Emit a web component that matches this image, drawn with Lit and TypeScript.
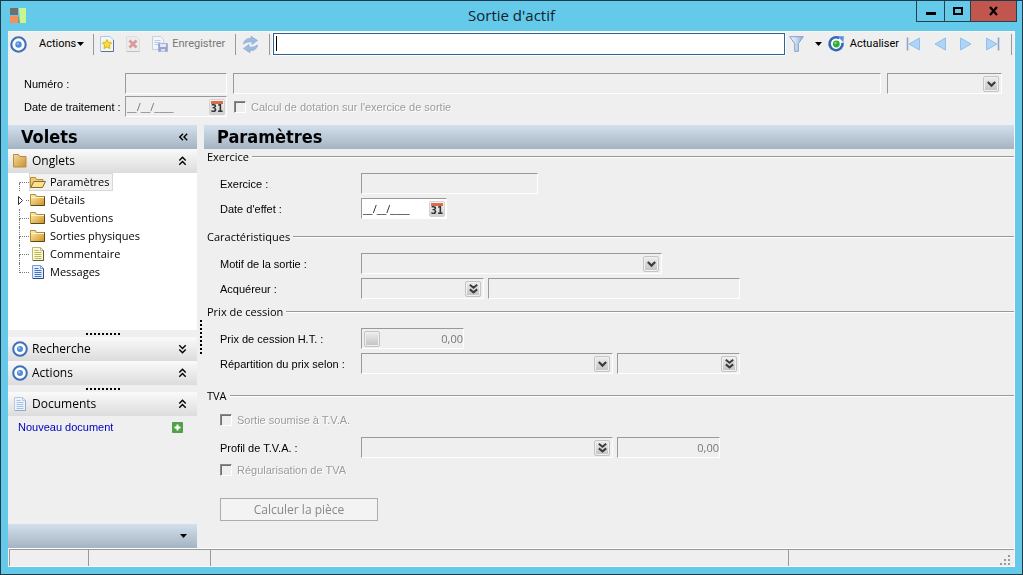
import { LitElement, html, svg, css, nothing } from "lit";
import { customElement, property, state } from "lit/decorators.js";
import { classMap } from "lit/directives/class-map.js";

const controls = css`
  * { box-sizing: border-box; }
  button, input, select { font: inherit; margin: 0; padding: 0; border: 0; background: none; color: inherit; border-radius: 0; }
  button { display: inline-flex; align-items: center; }
  svg { display: block; flex: none; overflow: visible; }
`;

/* ---------- icons ---------- */

const target = (size: number) => html`<svg width=${size} height=${size} viewBox="0 0 16 16" aria-hidden="true">
  <circle cx="8" cy="8" r="6.8" fill="#fff" stroke="#3f6fb8" stroke-width="2"></circle>
  <circle cx="8" cy="8" r="3" fill="#4c8bd6"></circle><circle cx="7.3" cy="7.2" r="1.2" fill="#8cc0f2"></circle></svg>`;

const folder = html`<svg width="16" height="16" viewBox="0 0 16 16" aria-hidden="true">
  <defs><linearGradient id="f" x1="0" y1="0" x2="1" y2="1"><stop offset="0" stop-color="#fff2b8"></stop><stop offset="1" stop-color="#d08f1c"></stop></linearGradient></defs>
  <path d="M.5 4.500v-2h5l1 2h8v9h-14z" fill="url(#f)" stroke="#b98a34"></path>
  <path d="M1 13.500h13.500v-9" fill="none" stroke="#5e481d"></path><path d="M1.500 5.500h12.500" fill="none" stroke="#fff6d0"></path></svg>`;

const folderTab = html`<svg width="16" height="16" viewBox="0 0 16 16" aria-hidden="true">
  <defs><linearGradient id="t" x1="0" y1="0" x2="1" y2="1"><stop offset="0" stop-color="#f8dc98"></stop><stop offset="1" stop-color="#c98f35"></stop></linearGradient></defs>
  <path d="M1.500 3.500v-2h5l1.500 2h6v10.500h-12.500z" fill="url(#t)" stroke="#b98a44"></path></svg>`;

const folderOpen = html`<svg width="16" height="16" viewBox="0 0 16 16" aria-hidden="true">
  <path d="M.5 13.500v-10h5l1 2h6.500v2.500" fill="#f0cc74" stroke="#b98a34"></path>
  <path d="M.8 13.500l3-6h11.700l-3 6z" fill="#fbe08f" stroke="#8a6a2a"></path></svg>`;

const page = (line: string, fill: string, edge: string, dark: string) => html`<svg width="16" height="16" viewBox="0 0 16 16" aria-hidden="true">
  <path d="M2.500 1.500h8l3 3v10h-11z" fill=${fill} stroke=${edge}></path>
  <path d="M10.500 1.500v3h3" fill="none" stroke=${edge}></path>
  <path d="M4.500 6.500h7M4.500 8.500h7M4.500 10.500h7M4.500 12.500h7M4.500 4.500h4" stroke=${line}></path>
  <path d="M3 14.500h10.500v-10" fill="none" stroke=${dark}></path></svg>`;

const pageNew = html`<svg width="14" height="16" viewBox="0 0 14 16" aria-hidden="true">
  <path d="M.5 .5h9.500l3.500 3.500v11.500h-13z" fill="#f1f6fd" stroke="#b3c6e0"></path><path d="M1 15.500h12.500v-11.500" fill="none" stroke="#5d7391"></path>
  <path d="M2.500 4h9v9h-9z" fill="#fbf3a8"></path>
  <path d="M7 3.500l1.400 3 3.300.4-2.400 2.300.6 3.300-2.900-1.600-2.900 1.600.6-3.300-2.400-2.300 3.300-.4z" fill="#ffdc2e" stroke="#b9a04a" stroke-width=".7"></path></svg>`;

const pageDelete = html`<svg width="14" height="16" viewBox="0 0 14 16" aria-hidden="true">
  <path d="M.5 .5h10l3 3v12h-13z" fill="#ececec" stroke="#dcdde0"></path><path d="M1 15.500h12.500" stroke="#bcc1ca"></path>
  <path d="M3.500 4.500l7 7M10.500 4.500l-7 7" stroke="#d89a9a" stroke-width="2.800"></path></svg>`;

const save = html`<svg width="16" height="16" viewBox="0 0 16 16" aria-hidden="true">
  <path d="M.5 .5h8l3 3v10h-11z" fill="#f2f6fb" stroke="#c2cfe4"></path><path d="M2.500 4.500h6M2.500 6.500h6M2.500 8.500h4" stroke="#bccbe6"></path>
  <path d="M6.500 7.500h9v8h-9z" fill="#9aa3d0" stroke="#a9b0da"></path><path d="M8 8h6v3h-6z" fill="#e4e8f6"></path><path d="M9 13h4v2.500h-4z" fill="#d7dcf0"></path></svg>`;

const sync = html`<svg width="17" height="17" viewBox="0 0 17 17" aria-hidden="true">
  <path d="M1.500 8c.5-4.500 4.500-6 7.500-5.500v-2.300l6.500 4.300-5.500 4v-2.500c-3-.5-5.500 0-8.500 2z" fill="#9dbbe0" stroke="#8aa9d2" stroke-width=".7"></path>
  <path d="M15.500 9c-.5 4.500-4.500 6-7.500 5.500v2.300l-6.500-4.300 5.500-4v2.500c3 .5 5.500 0 8.500-2z" fill="#9dbbe0" stroke="#8aa9d2" stroke-width=".7"></path></svg>`;

const funnel = html`<svg width="15" height="16" viewBox="0 0 15 16" aria-hidden="true">
  <defs><linearGradient id="n" x1="0" y1="0" x2="1" y2="0"><stop offset="0" stop-color="#fff"></stop><stop offset="1" stop-color="#8fb2e0"></stop></linearGradient></defs>
  <path d="M.7 .7h13.600l-5 6.800v7.800h-3.600v-7.800z" fill="url(#n)" stroke="#829cc8"></path></svg>`;

const reload = html`<svg width="17" height="16" viewBox="0 0 17 16" aria-hidden="true">
  <path d="M11.500 2.200a6.500 6.500 0 1 0 3 4.600" fill="#fff" stroke="#3568b2" stroke-width="2.600"></path>
  <path d="M9.500 .3h6.400l-.6 6z" fill="#5b95dc"></path>
  <circle cx="8.300" cy="8" r="3.400" fill="#2fae35"></circle><circle cx="7.500" cy="7" r="1.200" fill="#7bd97a"></circle></svg>`;

const nav = (dir: "left" | "right", bar: boolean) => {
  const arrow = dir === "left"
    ? svg`<path d="M13.500 1v12l-10.500-6z" fill="#aed5f8" stroke="#93bfea"></path>`
    : svg`<path d="M2.500 1v12l10.500-6z" fill="#aed5f8" stroke="#93bfea"></path>`;
  const edge = dir === "left"
    ? svg`<path d="M1.500 .5v13" stroke="#8ba6ca" stroke-width="1.600"></path>`
    : svg`<path d="M14.500 .5v13" stroke="#8ba6ca" stroke-width="1.600"></path>`;
  return html`<svg width="16" height="14" viewBox="0 0 16 14" aria-hidden="true">${arrow}${bar ? edge : nothing}</svg>`;
};

const caret = html`<svg width="7" height="4" viewBox="0 0 7 4" aria-hidden="true"><path d="M0 0h7l-3.500 4z" fill="#000"></path></svg>`;

const chevrons: Record<string, string> = {
  up: "M1.300 4.500l3.200-3.200 3.200 3.200M1.300 8.700l3.200-3.200 3.200 3.200",
  down: "M1.300 1.300l3.200 3.200 3.200-3.200M1.300 5.500l3.200 3.200 3.200-3.200",
  left: "M4 1.800l-3.200 3.200 3.200 3.200M8.200 1.800l-3.200 3.200 3.200 3.200",
};
const chevron = (dir: string) => html`<svg width="9" height="10" viewBox="0 0 9 10" aria-hidden="true">
  <path d=${chevrons[dir]} fill="none" stroke="#000" stroke-width="1.400"></path></svg>`;

const dropArrow = html`<svg width="9" height="10" viewBox="0 0 9 10" aria-hidden="true"><path d="M.8 3l3.700 3.600 3.700-3.600" fill="none" stroke="#3c3c3c" stroke-width="2.200"></path></svg>`;
const lookupArrow = html`<svg width="9" height="10" viewBox="0 0 9 10" aria-hidden="true"><path d="M.8 .8l3.700 3 3.700-3M.8 5.400l3.700 3 3.700-3" fill="none" stroke="#3c3c3c" stroke-width="2"></path></svg>`;

/* ---------- field: text, select, lookup, date, amount ---------- */

@customElement("x-field")
class XField extends LitElement {
  @property() kind = "text";
  @property() label = "";
  @property() value = "";
  @property({ type: Boolean }) enabled = false;

  static styles = [controls, css`
    :host { display: block; font: 11px/15px "Open Sans", "Noto Sans", sans-serif; color: #777; }
    .box { display: flex; align-items: center; height: 21px; border: 1px solid; border-color: #9a9a9a #fff #fff #9a9a9a; background: #efefef; }
    .box.enabled { background: #fff; color: #222; }
    .control { flex: 1; min-width: 0; width: 0; height: 17px; padding: 0 1px; appearance: none; outline: 0; opacity: 1; }
    .right { text-align: right; padding: 0; }
    .drop { width: 16px; height: 16px; margin: 0 2px; flex: none; justify-content: center; display: flex; align-items: center; border: 1px solid #c4c4c4; border-radius: 2px; background: linear-gradient(#eeeeee, #c2c2c2); box-shadow: inset 0 0 0 1px #f0f0f0; }
    .calendar { width: 16px; height: 16px; margin-right: 1px; flex: none; display: flex; flex-direction: column; align-items: stretch; padding: 0 1px; border: 1px solid #d2d2d2; border-radius: 2px; background: linear-gradient(#f6f6f6, #d2d2d2); font: bold 10px/10px "DejaVu Sans Condensed", "DejaVu Sans", sans-serif; color: #333; text-align: center; }
    .calendar::before { content: ""; height: 3px; margin-top: 1px; background: #dd6a4b; }
    .day { display: flex; justify-content: center; }
  `];

  render() {
    const off = !this.enabled;
    const right = this.kind === "amount" || this.kind === "number";
    return html`<div class=${classMap({ box: true, enabled: this.enabled })}>
      ${this.kind === "amount" ? html`<button class="drop" disabled aria-label="Calculatrice"></button>` : nothing}
      ${this.kind === "select"
        ? html`<select class="control" aria-label=${this.label} ?disabled=${off}><option></option></select><span class="drop">${dropArrow}</span>`
        : html`<input class=${classMap({ control: true, right })} type="text" aria-label=${this.label} .value=${this.value} ?disabled=${off}>`}
      ${this.kind === "lookup" ? html`<button class="drop" ?disabled=${off} aria-label="Rechercher">${lookupArrow}</button>` : nothing}
      ${this.kind === "date" ? html`<button class="calendar" ?disabled=${off} aria-label="Calendrier"><span class="day">31</span></button>` : nothing}
    </div>`;
  }
}

/* ---------- tick box ---------- */

@customElement("x-check")
class XCheck extends LitElement {
  @property() label = "";
  static styles = [controls, css`
    :host { display: block; font: 11px/14px "Liberation Sans", Arial, sans-serif; color: #9b9b9b; text-shadow: 1px 1px #fff; }
    .line { display: flex; align-items: center; gap: 5px; white-space: nowrap; }
    .tick { appearance: none; width: 12px; height: 12px; flex: none; background: #efefef; border: 1px solid; border-color: #8a8a8a #fff #fff #8a8a8a; box-shadow: inset 1px 1px #6f6f6f; }
  `];
  render() {
    return html`<label class="line"><input class="tick" type="checkbox" disabled>${this.label}</label>`;
  }
}

/* ---------- side panel ---------- */

@customElement("side-panel")
class SidePanel extends LitElement {
  @state() private selected = "Paramètres";
  private nodes = [
    { name: "Paramètres" }, { name: "Détails", branch: true }, { name: "Subventions" },
    { name: "Sorties physiques" }, { name: "Commentaire", note: true }, { name: "Messages", message: true },
  ] as { name: string; branch?: boolean; note?: boolean; message?: boolean }[];

  static styles = [controls, css`
    :host { display: flex; flex-direction: column; font: 12px/16px "Open Sans", "Noto Sans", sans-serif; color: #000; }
    .title { margin: 0; display: flex; align-items: center; justify-content: space-between; height: 24px; padding: 0 9px 0 13px; background: linear-gradient(#d3e0ec, #a4b3c3); font: bold 18px/24px "DejaVu Sans Condensed", "DejaVu Sans", sans-serif; }
    .head { display: flex; align-items: center; gap: 4px; width: 100%; height: 24px; padding: 0 10px 0 4px; background: linear-gradient(#fafafa, #dcdcdc); text-align: left; }
    .grow { flex: 1; }
    .tree { list-style: none; margin: 0; padding: 0 0 0 11px; flex: 0 0 157px; background: #fff; font-size: 11px; }
    .node { display: flex; align-items: center; height: 18px; }
    .stem { width: 10px; height: 18px; flex: none; display: grid; grid-template-rows: 10px 8px; }
    .stem::before { content: ""; border-left: 1px dotted #777; border-bottom: 1px dotted #777; }
    .stem::after { content: ""; border-left: 1px dotted #777; }
    .first::before { border-left-color: transparent; }
    .last::after { border-left-color: transparent; }
    .branch { display: flex; align-items: center; }
    .branch::before, .branch::after { content: none; }
    .item { height: 18px; gap: 4px; padding: 0 2px 0 0; border: 1px solid transparent; white-space: nowrap; }
    .selected { background: #f1f1f1; border-color: #d8d8d8; }
    .grip { height: 7px; display: flex; justify-content: center; align-items: center; }
    .grip::before { content: ""; width: 34px; height: 2px; background: repeating-linear-gradient(90deg, #000 0 2px, transparent 2px 4px); }
    .doc { display: flex; align-items: center; justify-content: space-between; padding: 3px 14px 0 10px; font: 11px/16px "Liberation Sans", Arial, sans-serif; }
    .link { color: #0000c0; text-decoration: none; }
    .space { flex: 1; }
    .foot { display: flex; align-items: center; justify-content: flex-end; height: 24px; padding-right: 10px; background: linear-gradient(#d3e0ec, #a4b3c3); }
  `];

  private head(icon: unknown, text: string, dir: string) {
    return html`<button class="head">${icon}<span class="grow">${text}</span>${chevron(dir)}</button>`;
  }

  render() {
    return html`
      <h2 class="title">Volets<button aria-label="Réduire">${chevron("left")}</button></h2>
      ${this.head(folderTab, "Onglets", "up")}
      <ul class="tree">
        ${this.nodes.map((n, i) => html`<li class="node">
          <span class=${classMap({ stem: true, first: i === 0, last: i === this.nodes.length - 1, branch: !!n.branch })}>
            ${n.branch ? html`<svg width="10" height="10" viewBox="0 0 10 10" aria-hidden="true"><path d="M-.5 1.500l4 4-4 4z" fill="#fff" stroke="#333"></path><path d="M7 5.500h3" stroke="#777" stroke-dasharray="1 1"></path></svg>` : nothing}
          </span>
          <button class=${classMap({ item: true, selected: n.name === this.selected })} @click=${() => (this.selected = n.name)}>
            ${n.note ? page("#b9b564", "#fdfad2", "#b8b47c", "#5f5b35") : n.message ? page("#3f74c8", "#e3eefc", "#7d9ccf", "#2f4a78") : n.name === this.selected ? folderOpen : folder}${n.name}
          </button></li>`)}
      </ul>
      <div class="grip"></div>
      ${this.head(target(16), "Recherche", "down")}
      ${this.head(target(16), "Actions", "up")}
      <div class="grip"></div>
      ${this.head(page("#a5c0e6", "#eef4fc", "#b7c8e2", "#93a8c8"), "Documents", "up")}
      <div class="doc"><a class="link" href="#">Nouveau document</a>
        <svg width="11" height="11" viewBox="0 0 11 11" aria-hidden="true"><path d="M.5 .5h10v10h-10z" fill="#4ca341" stroke="#5c9a56"></path><path d="M5.500 2.500v6M2.500 5.500h6" stroke="#fff" stroke-width="2"></path></svg></div>
      <div class="space"></div>
      <div class="foot"><button aria-label="Options des volets">${caret}</button></div>`;
  }
}

/* ---------- window ---------- */

@customElement("app-root")
class AppRoot extends LitElement {
  static styles = [controls, css`
    :host { display: block; height: 100vh; color: #000; font: 11px/14px "Liberation Sans", Arial, sans-serif; }
    .window { display: flex; flex-direction: column; height: 100%; border: 1px solid #1c3a4c; background: #65c9ea; padding: 0 7px 7px; }
    .titlebar { display: grid; grid-template-columns: 1fr auto 1fr; height: 30px; flex: none; }
    .logo { margin: 6px 0 0 2px; }
    .caption { margin: 0; font: 15px/28px "Open Sans", "Noto Sans", sans-serif; color: #10222c; }
    .buttons { display: flex; justify-self: end; height: 21px; margin-right: -2px; border: 1px solid #26414e; border-top: 0; }
    .win { width: 28px; justify-content: center; border-right: 1px solid #26414e; }
    .win.max { width: 26px; }
    .win.close { width: 45px; background: #c1564f; border-right: 0; }
    .client { flex: 1; min-height: 0; display: flex; flex-direction: column; background: #efefef; border: 1px solid #f8f8f8; border-width: 1px 1px 0 0; }
    .toolbar { display: flex; align-items: center; height: 24px; flex: none; padding-left: 2px; font: 11px/14px Roboto, sans-serif; }
    .tool { gap: 4px; height: 22px; white-space: nowrap; }
    .tool.off { color: #777; }
    .sep { width: 1px; height: 21px; background: #999; flex: none; }
    .menu { margin: 0 9px 0 12px; gap: 1px; }
    .files { display: flex; gap: 12px; margin: 0 10px 0 6px; }
    .sync { margin: 0 10px 0 6px; }
    .search { flex: 1; min-width: 0; height: 22px; margin: 0 4px 0 3px; border: 1px solid #2f6396; background: #fff; padding: 0 2px; outline: 0; font-size: 14px; box-shadow: 0 0 0 1px #fff; }
    .search:placeholder-shown { background: linear-gradient(#000, #000) 2px 2px / 1px 15px no-repeat #fff; caret-color: transparent; }
    .filter { margin-right: 11px; }
    .reload { margin: 0 7px 0 6px; gap: 5px; }
    .navs { display: flex; gap: 10px; margin-right: 11px; }
    .end { margin-right: 2px; }
    .form { display: grid; grid-template-columns: 95px 102px minmax(0, 1fr) 115px; gap: 2px 6px; padding: 17px 12px 8px 16px; align-items: center; flex: none; }
    .form-label { white-space: nowrap; }
    .wide { grid-column: 3 / 5; padding-left: 1px; }
    .body { flex: 1; min-height: 0; display: grid; grid-template-columns: 189px 7px minmax(0, 1fr); }
    .splitter { display: flex; justify-content: center; padding-top: 195px; }
    .splitter::before { content: ""; width: 2px; height: 34px; background: repeating-linear-gradient(#000 0 2px, transparent 2px 4px); }
    .panel-title { margin: 0; height: 24px; padding-left: 13px; background: linear-gradient(#d3e0ec, #a4b3c3); font: bold 18px/24px "DejaVu Sans Condensed", "DejaVu Sans", sans-serif; }
    .group { padding-bottom: 8px; }
    .group.tight { padding-bottom: 3px; }
    .group.loose { padding-bottom: 12px; }
    .legend { margin: 0 0 6px; padding-left: 3px; display: flex; align-items: center; gap: 3px; font: 11px/16px "Open Sans", "Noto Sans", sans-serif; }
    .legend::after { content: ""; flex: 1; height: 2px; background: linear-gradient(#989898 0 50%, #fff 50%); }
    .row { display: flex; align-items: center; height: 25px; padding-left: 16px; gap: 4px; }
    .row.check { height: 20px; }
    .row.first { margin-bottom: 5px; }
    .label { width: 137px; white-space: nowrap; }
    .w86 { width: 86px; } .w102 { width: 103px; } .w122 { width: 123px; } .w177 { width: 177px; }
    .w251 { width: 252px; } .w301 { width: 301px; }
    .compute { width: 158px; height: 23px; margin: 10px 0 0 16px; justify-content: center; border: 1px solid #acacac; background: #f3f3f3; color: #888; font: 12px/16px "Open Sans", "Noto Sans", sans-serif; }
    .status { display: flex; height: 19px; flex: none; border-top: 1px solid #fff; border-bottom: 1px solid #fff; padding-left: 1px; }
    .seg { border-top: 1px solid #999; border-left: 1px solid #999; }
    .seg.a { width: 79px; } .seg.b { width: 122px; } .seg.c { flex: 1; }
    .seg.d { width: 226px; display: flex; justify-content: flex-end; align-items: flex-end; padding: 0 4px 1px; }
  `];

  firstUpdated() {
    this.renderRoot.querySelector<HTMLInputElement>(".search")?.focus();
  }

  private row(label: string, ...fields: unknown[]) {
    return html`<div class="row"><span class="label">${label}</span>${fields}</div>`;
  }

  render() {
    return html`<div class="window">
      <header class="titlebar">
        <svg class="logo" width="17" height="17" viewBox="0 0 17 17" aria-hidden="true">
          <path d="M0 1h8v7h-8z" fill="#6f6f6f"></path><path d="M0 9h8v7h-8z" fill="#f58f5c"></path><path d="M9 1h7v15h-6z" fill="#c8f58e"></path><path d="M8 8l2 8h-2z" fill="#7d9a6a"></path></svg>
        <h1 class="caption">Sortie d'actif</h1>
        <div class="buttons">
          <button class="win" aria-label="Réduire"><svg width="10" height="10" viewBox="0 0 10 10"><path d="M0 6h10v3h-10z"></path></svg></button>
          <button class="win max" aria-label="Agrandir"><svg width="10" height="8" viewBox="0 0 10 8"><path d="M1 1h8v6h-8z" fill="none" stroke="#000" stroke-width="2"></path></svg></button>
          <button class="win close" aria-label="Fermer"><svg width="9" height="8" viewBox="0 0 9 8"><path d="M1 0l7 8M8 0l-7 8" stroke="#000" stroke-width="2.200"></path></svg></button>
        </div>
      </header>
      <main class="client">
        <div class="toolbar">
          <button class="tool" aria-label="Menu">${target(17)}</button>
          <button class="tool menu">Actions${caret}</button>
          <span class="sep"></span>
          <div class="files">
            <button class="tool" aria-label="Nouveau">${pageNew}</button>
            <button class="tool" aria-label="Supprimer" disabled>${pageDelete}</button>
            <button class="tool off" disabled>${save}Enregistrer</button>
          </div>
          <span class="sep"></span>
          <button class="tool sync" aria-label="Synchroniser" disabled>${sync}</button>
          <span class="sep"></span>
          <input class="search" type="text" placeholder=" " aria-label="Recherche">
          <button class="tool filter" aria-label="Filtrer">${funnel}</button>
          <button class="tool" aria-label="Options du filtre">${caret}</button>
          <button class="tool reload">${reload}Actualiser</button>
          <div class="navs">
            <button aria-label="Premier">${nav("left", true)}</button>
            <button aria-label="Précédent">${nav("left", false)}</button>
            <button aria-label="Suivant">${nav("right", false)}</button>
            <button aria-label="Dernier">${nav("right", true)}</button>
          </div>
          <span class="sep end"></span>
        </div>
        <div class="form">
          <span class="form-label">Numéro :</span>
          <x-field label="Numéro"></x-field>
          <x-field label="Libellé"></x-field>
          <x-field kind="select" label="État"></x-field>
          <span class="form-label">Date de traitement :</span>
          <x-field kind="date" label="Date de traitement" value="__/__/____"></x-field>
          <x-check class="wide" label="Calcul de dotation sur l'exercice de sortie"></x-check>
        </div>
        <div class="body">
          <side-panel></side-panel>
          <div class="splitter"></div>
          <section>
            <h2 class="panel-title">Paramètres</h2>
            <div class="group"><h3 class="legend">Exercice</h3>
              ${this.row("Exercice :", html`<x-field class="w177" label="Exercice"></x-field>`)}
              ${this.row("Date d'effet :", html`<x-field class="w86" kind="date" enabled label="Date d'effet" value="__/__/____"></x-field>`)}
            </div>
            <div class="group tight"><h3 class="legend">Caractéristiques</h3>
              ${this.row("Motif de la sortie :", html`<x-field class="w301" kind="select" label="Motif de la sortie"></x-field>`)}
              ${this.row("Acquéreur :", html`<x-field class="w122" kind="lookup" label="Acquéreur"></x-field>`, html`<x-field class="w251" label="Nom de l'acquéreur"></x-field>`)}
            </div>
            <div class="group loose"><h3 class="legend">Prix de cession</h3>
              ${this.row("Prix de cession H.T. :", html`<x-field class="w102" kind="amount" label="Prix de cession H.T." value="0,00"></x-field>`)}
              ${this.row("Répartition du prix selon :", html`<x-field class="w251" kind="select" label="Répartition du prix selon"></x-field>`, html`<x-field class="w122" kind="lookup" label="Clé de répartition"></x-field>`)}
            </div>
            <div class="group"><h3 class="legend">TVA</h3>
              <div class="row check first"><x-check label="Sortie soumise à T.V.A."></x-check></div>
              ${this.row("Profil de T.V.A. :", html`<x-field class="w251" kind="lookup" label="Profil de T.V.A."></x-field>`, html`<x-field class="w102" kind="number" label="Montant de T.V.A." value="0,00"></x-field>`)}
              <div class="row check"><x-check label="Régularisation de TVA"></x-check></div>
            </div>
            <button class="compute" disabled>Calculer la pièce</button>
          </section>
        </div>
        <footer class="status">
          <div class="seg a"></div><div class="seg b"></div><div class="seg c"></div>
          <div class="seg d"><svg width="10" height="10" viewBox="0 0 10 10" aria-hidden="true"><path d="M8 0h2v2h-2zM8 4h2v2h-2zM4 4h2v2h-2zM8 8h2v2h-2zM4 8h2v2h-2zM0 8h2v2h-2z" fill="#999"></path></svg></div>
        </footer>
      </main>
    </div>`;
  }
}
